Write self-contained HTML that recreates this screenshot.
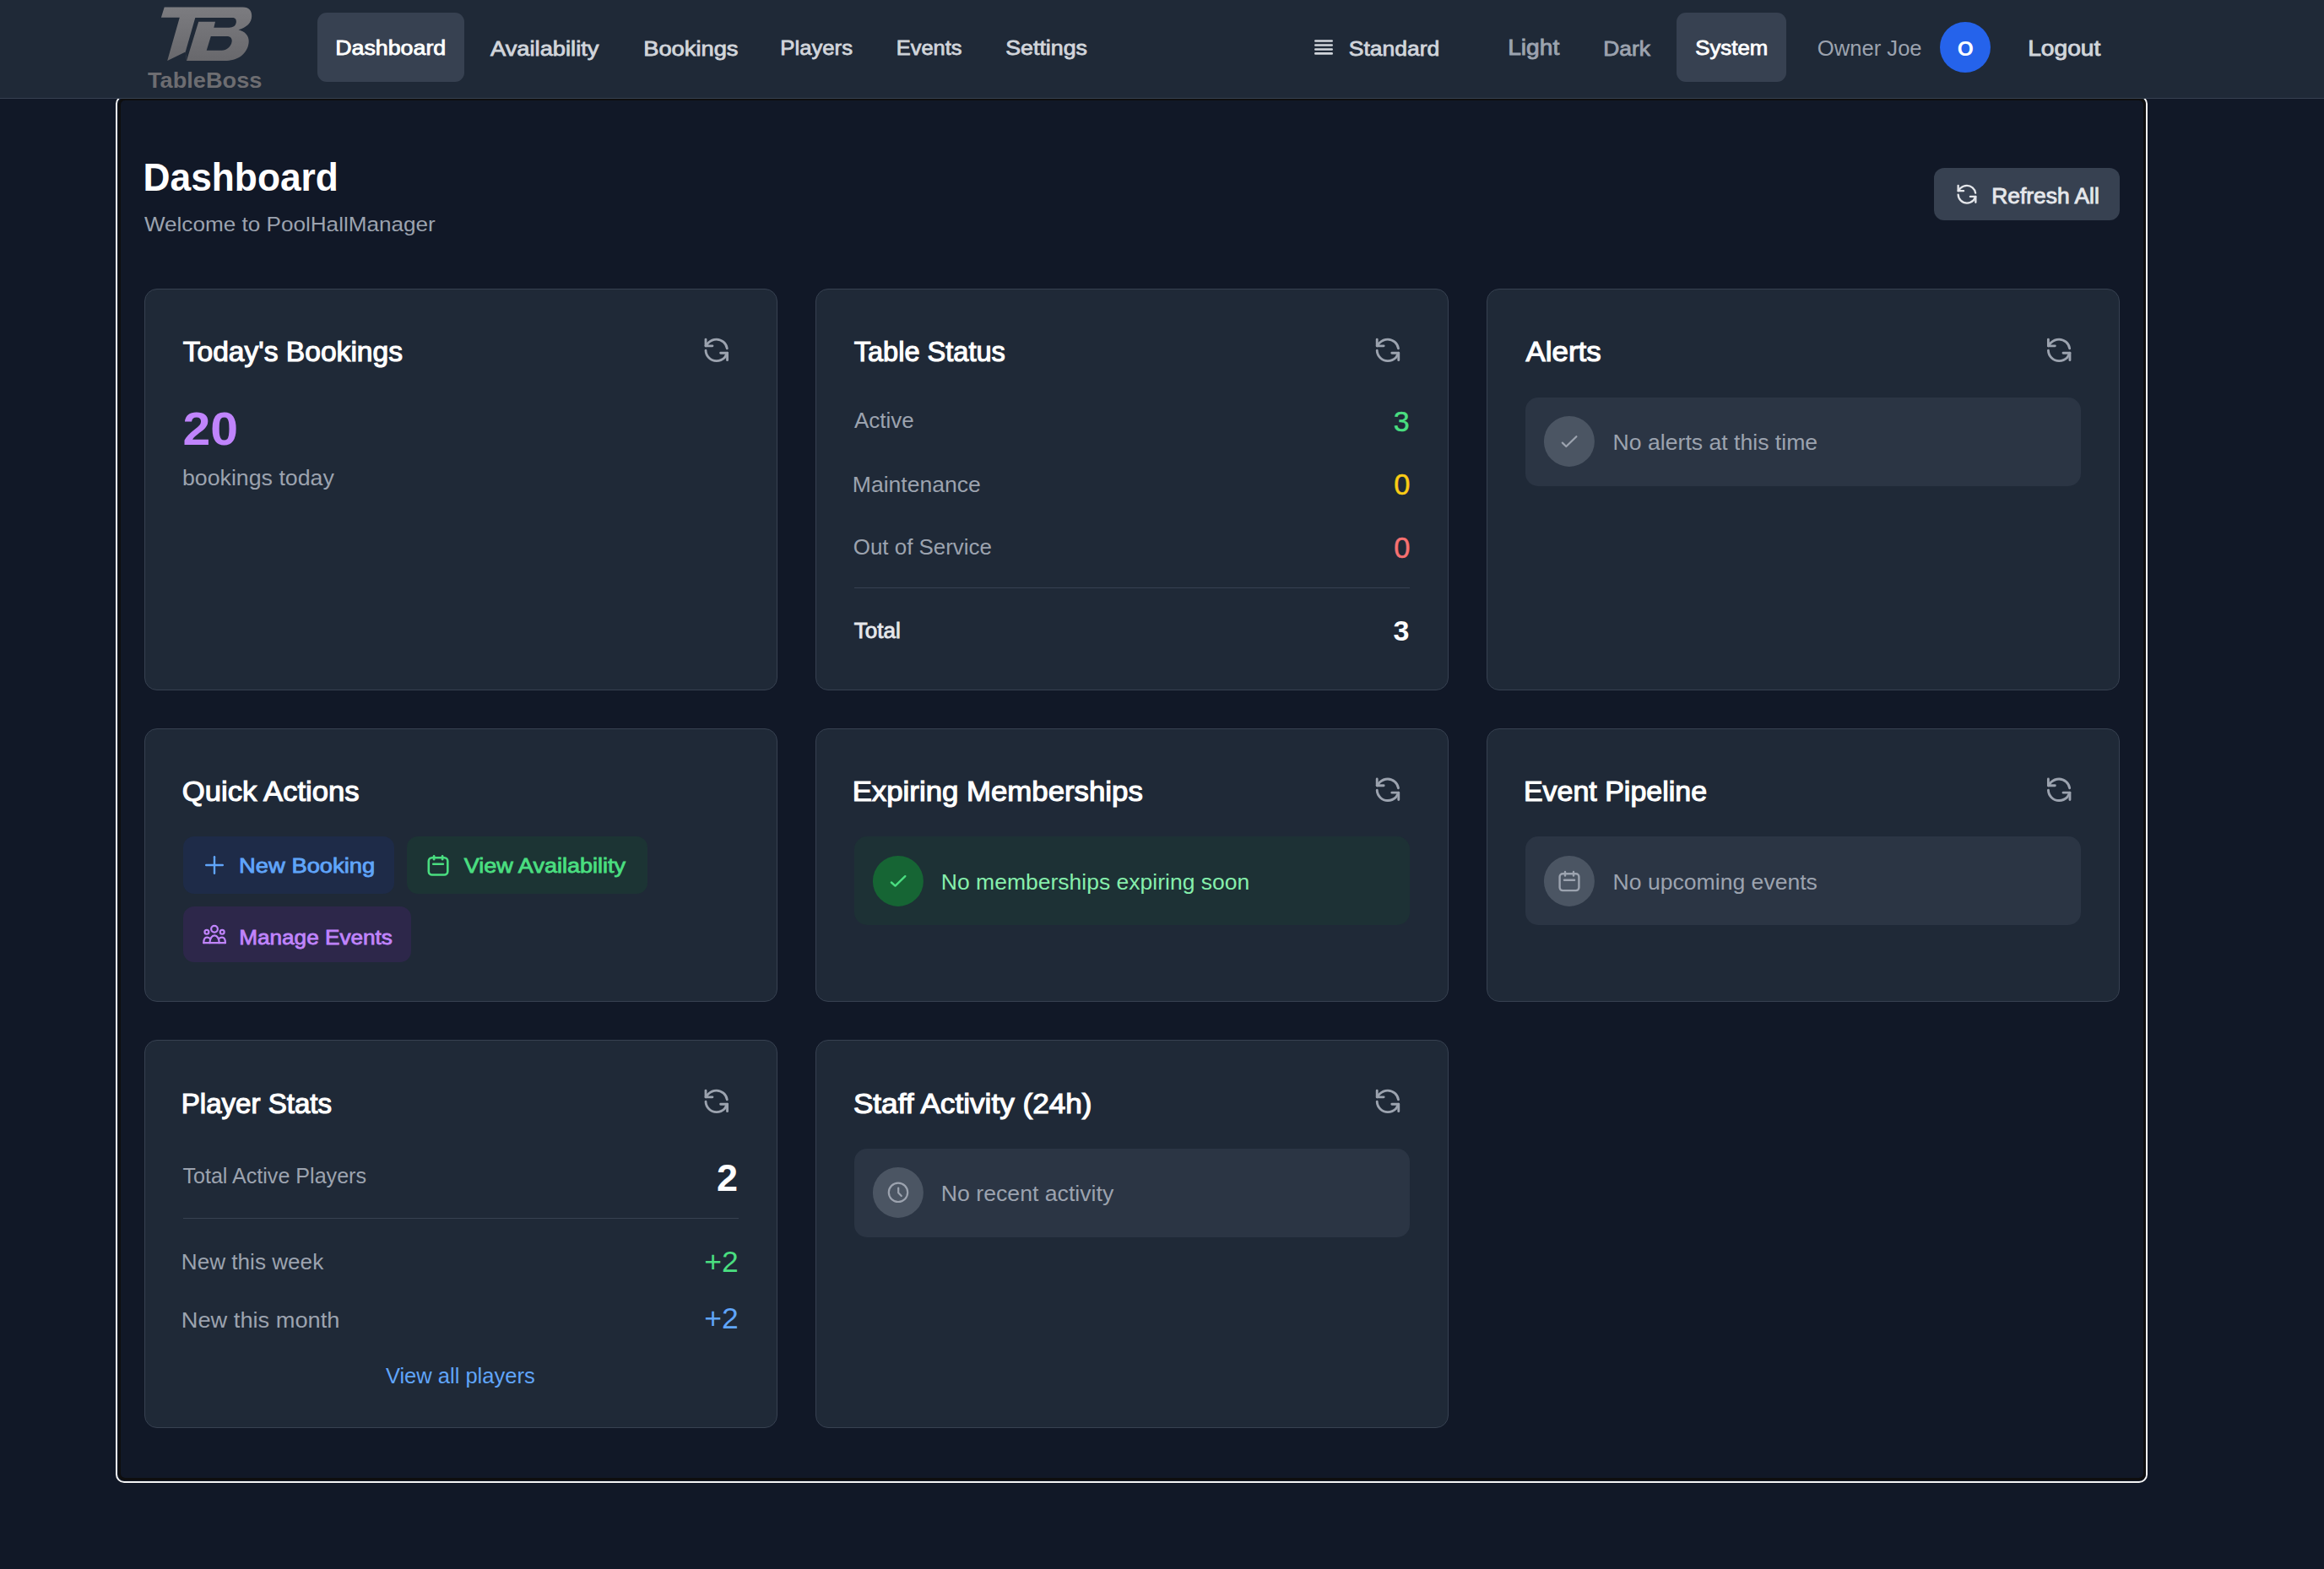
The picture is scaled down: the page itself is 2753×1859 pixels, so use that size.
<!DOCTYPE html>
<html><head><meta charset="utf-8"><style>
html,body{margin:0;padding:0;}
body{width:2753px;height:1859px;background:#111827;position:relative;overflow:hidden;font-family:"Liberation Sans",sans-serif;}
.t{position:absolute;white-space:nowrap;}
svg.ov{position:absolute;left:0;top:0;}
</style></head><body>
<div style="position:absolute;left:137px;top:113px;width:2407.4px;height:1643.7px;box-sizing:border-box;border:2.6px solid #f4f4f4;border-radius:10px;"></div>
<div style="position:absolute;left:139.6px;top:115.6px;width:2402.2px;height:1638.5px;box-sizing:border-box;border:3.1px solid #0e0e0f;border-radius:8px;"></div>
<div style="position:absolute;left:0;top:0;width:2753px;height:116px;background:#1f2937;border-bottom:1.3px solid #374151;"></div>
<div class="t" style="left:174.69px;top:82.17px;font-size:26.5px;line-height:26.5px;font-weight:700;color:#6d6d71;transform:scaleX(1.025);transform-origin:0 0;">TableBoss</div>
<div style="position:absolute;left:376.00px;top:15.00px;width:174.00px;height:82.00px;background:#374151;border-radius:11px;"></div>
<div style="position:absolute;left:1986.00px;top:15.00px;width:130.00px;height:82.00px;background:#374151;border-radius:11px;"></div>
<div class="t" style="left:397.26px;top:43.28px;font-size:26.78px;line-height:26.78px;font-weight:400;color:#ffffff;letter-spacing:0.000px;-webkit-text-stroke:0.91px #ffffff;transform:scaleY(0.900);transform-origin:0 22.67px;">Dashboard</div>
<div class="t" style="left:580.91px;top:42.79px;font-size:27.34px;line-height:27.34px;font-weight:400;color:#d1d5db;letter-spacing:0.000px;-webkit-text-stroke:0.93px #d1d5db;transform:scaleY(0.900);transform-origin:0 23.15px;">Availability</div>
<div class="t" style="left:762.22px;top:42.83px;font-size:27.30px;line-height:27.30px;font-weight:400;color:#d1d5db;letter-spacing:0.000px;-webkit-text-stroke:0.93px #d1d5db;transform:scaleY(0.900);transform-origin:0 23.11px;">Bookings</div>
<div class="t" style="left:924.33px;top:44.22px;font-size:25.69px;line-height:25.69px;font-weight:400;color:#d1d5db;letter-spacing:0.000px;-webkit-text-stroke:0.87px #d1d5db;transform:scaleY(0.927);transform-origin:0 21.75px;">Players</div>
<div class="t" style="left:1061.85px;top:44.47px;font-size:25.40px;line-height:25.40px;font-weight:400;color:#d1d5db;letter-spacing:0.000px;-webkit-text-stroke:0.86px #d1d5db;transform:scaleY(0.938);transform-origin:0 21.50px;">Events</div>
<div class="t" style="left:1191.24px;top:43.27px;font-size:26.78px;line-height:26.78px;font-weight:400;color:#d1d5db;letter-spacing:0.000px;-webkit-text-stroke:0.91px #d1d5db;transform:scaleY(0.900);transform-origin:0 22.67px;">Settings</div>
<div class="t" style="left:1597.85px;top:43.55px;font-size:26.46px;line-height:26.46px;font-weight:400;color:#d1d5db;letter-spacing:0.000px;-webkit-text-stroke:0.90px #d1d5db;transform:scaleY(0.900);transform-origin:0 22.40px;">Standard</div>
<div class="t" style="left:1786.17px;top:42.09px;font-size:28.16px;line-height:28.16px;font-weight:400;color:#9ca3af;letter-spacing:0.000px;-webkit-text-stroke:0.96px #9ca3af;transform:scaleY(0.900);transform-origin:0 23.84px;">Light</div>
<div class="t" style="left:1899.28px;top:43.61px;font-size:26.40px;line-height:26.40px;font-weight:400;color:#9ca3af;letter-spacing:0.000px;-webkit-text-stroke:0.90px #9ca3af;transform:scaleY(0.903);transform-origin:0 22.34px;">Dark</div>
<div class="t" style="left:2008.27px;top:44.13px;font-size:25.79px;line-height:25.79px;font-weight:400;color:#ffffff;letter-spacing:0.000px;-webkit-text-stroke:0.88px #ffffff;transform:scaleY(0.924);transform-origin:0 21.83px;">System</div>
<div class="t" style="left:2402.17px;top:42.05px;font-size:28.20px;line-height:28.20px;font-weight:400;color:#d1d5db;letter-spacing:0.000px;-webkit-text-stroke:0.96px #d1d5db;transform:scaleY(0.900);transform-origin:0 23.87px;">Logout</div>
<div class="t" style="left:2152.79px;top:44.72px;font-size:25.61px;line-height:25.61px;font-weight:400;color:#9ca3af;letter-spacing:0.000px;transform:scaleY(0.976);transform-origin:0 21.68px;">Owner Joe</div>
<div style="position:absolute;left:2298.00px;top:26.00px;width:60.00px;height:60.00px;background:#2563eb;border-radius:30px;"></div>
<div class="t" style="left:2318.78px;top:45.56px;font-size:24.50px;line-height:24.50px;font-weight:700;color:#ffffff;letter-spacing:0.000px;">O</div>
<div class="t" style="left:169.54px;top:189.40px;font-size:44.30px;line-height:44.30px;font-weight:700;color:#ffffff;letter-spacing:0.000px;transform:scaleY(1.027);transform-origin:0 37.50px;">Dashboard</div>
<div class="t" style="left:170.89px;top:252.49px;font-size:26.12px;line-height:26.12px;font-weight:400;color:#9ca3af;letter-spacing:0.000px;transform:scaleY(0.946);transform-origin:0 22.11px;">Welcome to PoolHallManager</div>
<div style="position:absolute;left:2291.00px;top:199.00px;width:220.00px;height:62.00px;background:#374151;border-radius:12px;"></div>
<div class="t" style="left:2359.28px;top:218.52px;font-size:26.38px;line-height:26.38px;font-weight:400;color:#e5e7eb;letter-spacing:0.000px;-webkit-text-stroke:0.90px #e5e7eb;transform:scaleY(0.966);transform-origin:0 22.33px;">Refresh All</div>
<div style="position:absolute;left:171.20px;top:342.20px;width:749.40px;height:475.80px;box-sizing:border-box;background:#1f2937;border:1.5px solid #374151;border-radius:15px;"></div>
<div class="t" style="left:216.72px;top:400.30px;font-size:33.58px;line-height:33.58px;font-weight:400;color:#ffffff;letter-spacing:0.000px;-webkit-text-stroke:1.14px #ffffff;">Today's Bookings</div>
<div style="position:absolute;left:966.20px;top:342.20px;width:749.60px;height:475.80px;box-sizing:border-box;background:#1f2937;border:1.5px solid #374151;border-radius:15px;"></div>
<div class="t" style="left:1011.72px;top:401.18px;font-size:32.56px;line-height:32.56px;font-weight:400;color:#ffffff;letter-spacing:0.000px;-webkit-text-stroke:1.11px #ffffff;transform:scaleY(1.038);transform-origin:0 27.56px;">Table Status</div>
<div style="position:absolute;left:1761.40px;top:342.20px;width:749.60px;height:475.80px;box-sizing:border-box;background:#1f2937;border:1.5px solid #374151;border-radius:15px;"></div>
<div class="t" style="left:1807.62px;top:399.19px;font-size:34.87px;line-height:34.87px;font-weight:400;color:#ffffff;letter-spacing:0.000px;-webkit-text-stroke:1.19px #ffffff;transform:scaleY(0.969);transform-origin:0 29.52px;">Alerts</div>
<div style="position:absolute;left:171.20px;top:863.10px;width:749.40px;height:323.90px;box-sizing:border-box;background:#1f2937;border:1.5px solid #374151;border-radius:15px;"></div>
<div class="t" style="left:215.85px;top:920.01px;font-size:34.62px;line-height:34.62px;font-weight:400;color:#ffffff;letter-spacing:0.000px;-webkit-text-stroke:1.18px #ffffff;transform:scaleY(0.976);transform-origin:0 29.30px;">Quick Actions</div>
<div style="position:absolute;left:966.20px;top:863.10px;width:749.60px;height:323.90px;box-sizing:border-box;background:#1f2937;border:1.5px solid #374151;border-radius:15px;"></div>
<div class="t" style="left:1009.64px;top:919.84px;font-size:34.81px;line-height:34.81px;font-weight:400;color:#ffffff;letter-spacing:0.000px;-webkit-text-stroke:1.18px #ffffff;transform:scaleY(0.971);transform-origin:0 29.46px;">Expiring Memberships</div>
<div style="position:absolute;left:1761.40px;top:863.10px;width:749.60px;height:323.90px;box-sizing:border-box;background:#1f2937;border:1.5px solid #374151;border-radius:15px;"></div>
<div class="t" style="left:1804.89px;top:920.57px;font-size:33.97px;line-height:33.97px;font-weight:400;color:#ffffff;letter-spacing:0.000px;-webkit-text-stroke:1.15px #ffffff;">Event Pipeline</div>
<div style="position:absolute;left:171.20px;top:1232.20px;width:749.40px;height:460.10px;box-sizing:border-box;background:#1f2937;border:1.5px solid #374151;border-radius:15px;"></div>
<div class="t" style="left:214.75px;top:1290.73px;font-size:33.09px;line-height:33.09px;font-weight:400;color:#ffffff;letter-spacing:0.000px;-webkit-text-stroke:1.13px #ffffff;transform:scaleY(1.021);transform-origin:0 28.01px;">Player Stats</div>
<div style="position:absolute;left:966.20px;top:1232.20px;width:749.60px;height:460.10px;box-sizing:border-box;background:#1f2937;border:1.5px solid #374151;border-radius:15px;"></div>
<div class="t" style="left:1010.90px;top:1288.94px;font-size:35.16px;line-height:35.16px;font-weight:400;color:#ffffff;letter-spacing:0.000px;-webkit-text-stroke:1.20px #ffffff;transform:scaleY(0.961);transform-origin:0 29.76px;">Staff Activity (24h)</div>
<div class="t" style="left:216.46px;top:478.41px;font-size:58.94px;line-height:58.94px;font-weight:700;color:#c084fc;letter-spacing:0.000px;transform:scaleY(0.952);transform-origin:0 49.89px;">20</div>
<div class="t" style="left:215.88px;top:552.95px;font-size:26.75px;line-height:26.75px;font-weight:400;color:#9ca3af;letter-spacing:0.000px;transform:scaleY(0.956);transform-origin:0 22.65px;">bookings today</div>
<div class="t" style="left:1011.95px;top:485.92px;font-size:25.96px;line-height:25.96px;font-weight:400;color:#9ca3af;letter-spacing:0.000px;transform:scaleY(0.985);transform-origin:0 21.98px;">Active</div>
<div class="t" style="left:1009.82px;top:560.82px;font-size:26.56px;line-height:26.56px;font-weight:400;color:#9ca3af;letter-spacing:0.000px;transform:scaleY(0.963);transform-origin:0 22.48px;">Maintenance</div>
<div class="t" style="left:1010.77px;top:636.27px;font-size:25.91px;line-height:25.91px;font-weight:400;color:#9ca3af;letter-spacing:0.000px;transform:scaleY(0.987);transform-origin:0 21.93px;">Out of Service</div>
<div class="t" style="left:1650.63px;top:481.87px;font-size:34.00px;line-height:34.00px;font-weight:400;color:#4ade80;letter-spacing:0.000px;-webkit-text-stroke:0.50px #4ade80;">3</div>
<div class="t" style="left:1651.21px;top:556.95px;font-size:34.50px;line-height:34.50px;font-weight:400;color:#facc15;letter-spacing:0.000px;-webkit-text-stroke:0.50px #facc15;">0</div>
<div class="t" style="left:1651.21px;top:631.85px;font-size:34.50px;line-height:34.50px;font-weight:400;color:#f87171;letter-spacing:0.000px;-webkit-text-stroke:0.50px #f87171;">0</div>
<div style="position:absolute;left:1012.00px;top:695.90px;width:658.00px;height:1.40px;background:#374151;border-radius:0px;"></div>
<div class="t" style="left:1011.86px;top:733.73px;font-size:26.02px;line-height:26.02px;font-weight:400;color:#e5e7eb;letter-spacing:0.000px;-webkit-text-stroke:0.88px #e5e7eb;transform:scaleY(0.969);transform-origin:0 22.02px;">Total</div>
<div class="t" style="left:1650.62px;top:729.82px;font-size:34.00px;line-height:34.00px;font-weight:700;color:#ffffff;letter-spacing:0.000px;">3</div>
<div style="position:absolute;left:1807.00px;top:471.00px;width:658.40px;height:104.70px;background:#2b3544;border-radius:15px;"></div>
<div class="t" style="left:1910.62px;top:511.37px;font-size:26.61px;line-height:26.61px;font-weight:400;color:#9ca3af;letter-spacing:0.000px;transform:scaleY(0.961);transform-origin:0 22.53px;">No alerts at this time</div>
<div style="position:absolute;left:1012.00px;top:991.00px;width:658.20px;height:104.70px;background:#1d3135;border-radius:15px;"></div>
<div class="t" style="left:1114.82px;top:1032.25px;font-size:26.52px;line-height:26.52px;font-weight:400;color:#86efac;letter-spacing:0.000px;transform:scaleY(0.965);transform-origin:0 22.45px;">No memberships expiring soon</div>
<div style="position:absolute;left:1807.00px;top:991.00px;width:658.40px;height:104.70px;background:#2b3544;border-radius:15px;"></div>
<div class="t" style="left:1910.62px;top:1032.20px;font-size:26.58px;line-height:26.58px;font-weight:400;color:#9ca3af;letter-spacing:0.000px;transform:scaleY(0.962);transform-origin:0 22.50px;">No upcoming events</div>
<div style="position:absolute;left:1012.00px;top:1361.00px;width:658.20px;height:104.70px;background:#2b3544;border-radius:15px;"></div>
<div class="t" style="left:1114.81px;top:1401.34px;font-size:26.66px;line-height:26.66px;font-weight:400;color:#9ca3af;letter-spacing:0.000px;transform:scaleY(0.960);transform-origin:0 22.56px;">No recent activity</div>
<div style="position:absolute;left:217.00px;top:991.00px;width:249.50px;height:67.80px;background:#1e2b48;border-radius:13px;"></div>
<div style="position:absolute;left:482.30px;top:991.00px;width:284.70px;height:67.80px;background:#1c3434;border-radius:13px;"></div>
<div style="position:absolute;left:217.00px;top:1074.20px;width:269.60px;height:66.20px;background:#2d274a;border-radius:13px;"></div>
<div class="t" style="left:283.12px;top:1011.38px;font-size:27.35px;line-height:27.35px;font-weight:400;color:#60a5fa;letter-spacing:0.000px;-webkit-text-stroke:0.93px #60a5fa;transform:scaleY(0.900);transform-origin:0 23.16px;">New Booking</div>
<div class="t" style="left:549.74px;top:1011.65px;font-size:27.04px;line-height:27.04px;font-weight:400;color:#4ade80;letter-spacing:0.000px;-webkit-text-stroke:0.92px #4ade80;transform:scaleY(0.900);transform-origin:0 22.89px;">View Availability</div>
<div class="t" style="left:283.20px;top:1096.81px;font-size:26.16px;line-height:26.16px;font-weight:400;color:#c084fc;letter-spacing:0.000px;-webkit-text-stroke:0.89px #c084fc;transform:scaleY(0.926);transform-origin:0 22.15px;">Manage Events</div>
<div class="t" style="left:216.44px;top:1380.96px;font-size:25.10px;line-height:25.10px;font-weight:400;color:#9ca3af;letter-spacing:0.000px;transform:scaleY(1.019);transform-origin:0 21.24px;">Total Active Players</div>
<div class="t" style="left:849.07px;top:1372.61px;font-size:45.00px;line-height:45.00px;font-weight:700;color:#ffffff;letter-spacing:0.000px;">2</div>
<div style="position:absolute;left:217.00px;top:1442.50px;width:658.00px;height:1.40px;background:#374151;border-radius:0px;"></div>
<div class="t" style="left:214.86px;top:1482.40px;font-size:26.11px;line-height:26.11px;font-weight:400;color:#9ca3af;letter-spacing:0.000px;transform:scaleY(0.980);transform-origin:0 22.10px;">New this week</div>
<div class="t" style="left:834.31px;top:1478.15px;font-size:35.50px;line-height:35.50px;font-weight:400;color:#4ade80;letter-spacing:0.000px;">+2</div>
<div class="t" style="left:214.77px;top:1549.64px;font-size:27.24px;line-height:27.24px;font-weight:400;color:#9ca3af;letter-spacing:0.000px;transform:scaleY(0.939);transform-origin:0 23.06px;">New this month</div>
<div class="t" style="left:834.31px;top:1545.15px;font-size:35.50px;line-height:35.50px;font-weight:400;color:#60a5fa;letter-spacing:0.000px;">+2</div>
<div class="t" style="left:456.89px;top:1617.89px;font-size:25.53px;line-height:25.53px;font-weight:400;color:#60a5fa;letter-spacing:0.000px;">View all players</div>
<svg class="ov" width="2753" height="1859" viewBox="0 0 2753 1859">
<defs><linearGradient id="lg" x1="0" y1="0" x2="0" y2="1"><stop offset="0" stop-color="#7c7c80"/><stop offset="1" stop-color="#68686c"/></linearGradient></defs>
<path fill="url(#lg)" d="M194.7,8.6 H287.7 C295.3,8.6 298.2,13.3 298.2,19 C298.2,26.8 292,32.8 282.5,35.3 C290,37.3 294.7,42 294.7,48.6 C294.7,62 283,71.9 268.8,71.9 H221 L219.7,61.5 L198.2,71.9 L212.8,20.7 H190.9 Z"/>
<path fill="#1f2937" d="M219.7,61.5 L231.3,21.1 H275 C279.3,21.1 280.3,23.8 279.7,27 C279,30.6 276,32.7 271.5,32.7 H253.3 L255,25.8 H235.2 L221,71.9 Z"/>
<path fill="#1f2937" d="M249.8,43 H268.8 C273.3,43 275.2,45.8 274.6,49.6 C273.7,55.6 268.5,59.8 262.7,59.8 H244.7 Z"/>
<line x1="1558.3" y1="48.5" x2="1577.7" y2="48.5" stroke="#d1d5db" stroke-width="2.6" stroke-linecap="round"/>
<line x1="1558.3" y1="53.5" x2="1577.7" y2="53.5" stroke="#d1d5db" stroke-width="2.6" stroke-linecap="round"/>
<line x1="1558.3" y1="58.5" x2="1577.7" y2="58.5" stroke="#d1d5db" stroke-width="2.6" stroke-linecap="round"/>
<line x1="1558.3" y1="63.4" x2="1577.7" y2="63.4" stroke="#d1d5db" stroke-width="2.6" stroke-linecap="round"/>
<g transform="translate(2316.20,216.40) scale(1.15)" fill="none" stroke="#e5e7eb" stroke-width="2" stroke-linecap="round" stroke-linejoin="round"><path d="M20.8 10.6A9 9 0 0 0 12 3 9.75 9.75 0 0 0 5.26 5.74L3 8.5"/><path d="M3 3v5.5h5.6"/><path d="M3 12.3A9 9 0 0 0 12 21 9.75 9.75 0 0 0 18.74 18.26L21 14.4"/><path d="M15.4 14.4H21v5.9"/></g>
<g transform="translate(831.74,397.80) scale(1.42)" fill="none" stroke="#9ca3af" stroke-width="2" stroke-linecap="round" stroke-linejoin="round"><path d="M20.8 10.6A9 9 0 0 0 12 3 9.75 9.75 0 0 0 5.26 5.74L3 8.5"/><path d="M3 3v5.5h5.6"/><path d="M3 12.3A9 9 0 0 0 12 21 9.75 9.75 0 0 0 18.74 18.26L21 14.4"/><path d="M15.4 14.4H21v5.9"/></g>
<g transform="translate(1626.94,397.80) scale(1.42)" fill="none" stroke="#9ca3af" stroke-width="2" stroke-linecap="round" stroke-linejoin="round"><path d="M20.8 10.6A9 9 0 0 0 12 3 9.75 9.75 0 0 0 5.26 5.74L3 8.5"/><path d="M3 3v5.5h5.6"/><path d="M3 12.3A9 9 0 0 0 12 21 9.75 9.75 0 0 0 18.74 18.26L21 14.4"/><path d="M15.4 14.4H21v5.9"/></g>
<g transform="translate(2422.14,397.80) scale(1.42)" fill="none" stroke="#9ca3af" stroke-width="2" stroke-linecap="round" stroke-linejoin="round"><path d="M20.8 10.6A9 9 0 0 0 12 3 9.75 9.75 0 0 0 5.26 5.74L3 8.5"/><path d="M3 3v5.5h5.6"/><path d="M3 12.3A9 9 0 0 0 12 21 9.75 9.75 0 0 0 18.74 18.26L21 14.4"/><path d="M15.4 14.4H21v5.9"/></g>
<g transform="translate(1626.94,918.70) scale(1.42)" fill="none" stroke="#9ca3af" stroke-width="2" stroke-linecap="round" stroke-linejoin="round"><path d="M20.8 10.6A9 9 0 0 0 12 3 9.75 9.75 0 0 0 5.26 5.74L3 8.5"/><path d="M3 3v5.5h5.6"/><path d="M3 12.3A9 9 0 0 0 12 21 9.75 9.75 0 0 0 18.74 18.26L21 14.4"/><path d="M15.4 14.4H21v5.9"/></g>
<g transform="translate(2422.14,918.70) scale(1.42)" fill="none" stroke="#9ca3af" stroke-width="2" stroke-linecap="round" stroke-linejoin="round"><path d="M20.8 10.6A9 9 0 0 0 12 3 9.75 9.75 0 0 0 5.26 5.74L3 8.5"/><path d="M3 3v5.5h5.6"/><path d="M3 12.3A9 9 0 0 0 12 21 9.75 9.75 0 0 0 18.74 18.26L21 14.4"/><path d="M15.4 14.4H21v5.9"/></g>
<g transform="translate(831.74,1287.80) scale(1.42)" fill="none" stroke="#9ca3af" stroke-width="2" stroke-linecap="round" stroke-linejoin="round"><path d="M20.8 10.6A9 9 0 0 0 12 3 9.75 9.75 0 0 0 5.26 5.74L3 8.5"/><path d="M3 3v5.5h5.6"/><path d="M3 12.3A9 9 0 0 0 12 21 9.75 9.75 0 0 0 18.74 18.26L21 14.4"/><path d="M15.4 14.4H21v5.9"/></g>
<g transform="translate(1626.94,1287.80) scale(1.42)" fill="none" stroke="#9ca3af" stroke-width="2" stroke-linecap="round" stroke-linejoin="round"><path d="M20.8 10.6A9 9 0 0 0 12 3 9.75 9.75 0 0 0 5.26 5.74L3 8.5"/><path d="M3 3v5.5h5.6"/><path d="M3 12.3A9 9 0 0 0 12 21 9.75 9.75 0 0 0 18.74 18.26L21 14.4"/><path d="M15.4 14.4H21v5.9"/></g>
<circle cx="1858.9" cy="522.9" r="30" fill="#4b5563"/>
<polyline points="1850.8,524.6 1855.3,529 1867.4,517.2" fill="none" stroke="#9ca3af" stroke-width="2.2" stroke-linecap="round" stroke-linejoin="round"/>
<circle cx="1063.9" cy="1043.9" r="30" fill="#166534"/>
<polyline points="1055.9,1045.5 1060.5,1049.6 1072.3,1038.2" fill="none" stroke="#4ade80" stroke-width="2.4" stroke-linecap="round" stroke-linejoin="round"/>
<circle cx="1858.9" cy="1043.9" r="30" fill="#4b5563"/>
<g fill="none" stroke="#9ca3af" stroke-width="2.4" stroke-linecap="round" stroke-linejoin="round"><rect x="1847.6" y="1035.2" width="22.8" height="19.9" rx="3.5"/><line x1="1854" y1="1033" x2="1854" y2="1037.5"/><line x1="1864" y1="1033" x2="1864" y2="1037.5"/><line x1="1853" y1="1042.7" x2="1865.1" y2="1042.7"/></g>
<circle cx="1063.9" cy="1412.9" r="30" fill="#4b5563"/>
<g fill="none" stroke="#9ca3af" stroke-width="2.2" stroke-linecap="round" stroke-linejoin="round"><circle cx="1064" cy="1412.8" r="11.2"/><polyline points="1064.2,1407.5 1064.2,1413.3 1067.8,1417"/></g>
<g stroke="#60a5fa" stroke-width="2.4" stroke-linecap="round"><line x1="244.2" y1="1025" x2="263.8" y2="1025"/><line x1="254" y1="1015.2" x2="254" y2="1034.8"/></g>
<g fill="none" stroke="#4ade80" stroke-width="2.6" stroke-linecap="round" stroke-linejoin="round"><rect x="507.8" y="1016.3" width="22.5" height="20.2" rx="4"/><line x1="514.1" y1="1014.3" x2="514.1" y2="1018.3"/><line x1="524.1" y1="1014.3" x2="524.1" y2="1018.3"/><line x1="513.2" y1="1023.7" x2="524.9" y2="1023.7"/></g>
<g fill="none" stroke="#c084fc" stroke-width="2.2" stroke-linecap="round" stroke-linejoin="round"><circle cx="244.9" cy="1104.3" r="2.45"/><circle cx="254" cy="1100.8" r="3.85"/><circle cx="263.2" cy="1104.3" r="2.45"/><path d="M241.3,1117.2 H266.9"/><path d="M248.45,1117.2 A5.65,8.9 0 0 1 259.75,1117.2"/><path d="M241.3,1117.2 C241.3,1113 242.8,1110.7 245.2,1110.7 C246.8,1110.7 248,1111.3 249.2,1112.3"/><path d="M266.9,1117.2 C266.9,1113 265.4,1110.7 263,1110.7 C261.4,1110.7 260.2,1111.3 259,1112.3"/></g>
</svg>
</body></html>
